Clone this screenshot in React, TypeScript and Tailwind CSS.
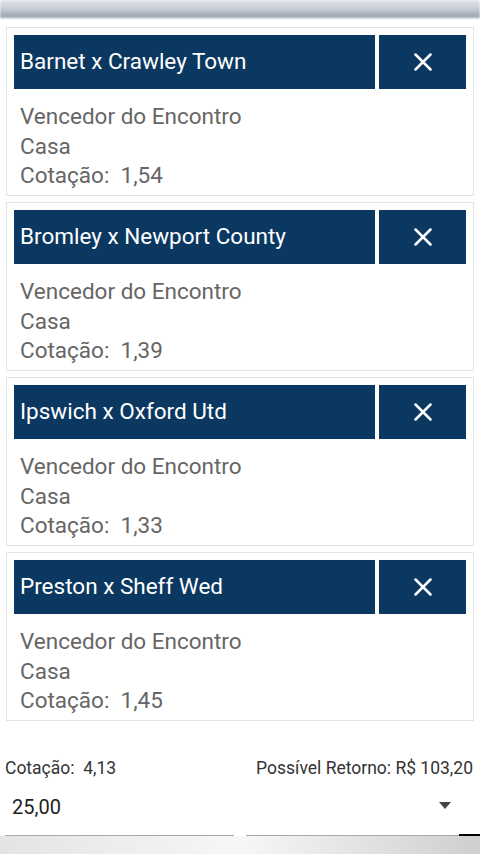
import React from "react";

const bets = [
  { match: "Barnet x Crawley Town", odd: "1,54" },
  { match: "Bromley x Newport County", odd: "1,39" },
  { match: "Ipswich x Oxford Utd", odd: "1,33" },
  { match: "Preston x Sheff Wed", odd: "1,45" },
];

function XIcon() {
  return (
    <svg width="18" height="18" viewBox="0 0 18 18" fill="none">
      <path d="M1.5 1.5 L16.5 16.5 M16.5 1.5 L1.5 16.5" stroke="white" strokeWidth="2.5" strokeLinecap="round" />
    </svg>
  );
}

export default function App() {
  return (
    <div
      className="w-[480px] h-[854px] bg-white overflow-hidden flex flex-col"
      style={{ fontFamily: "Roboto, 'Noto Sans', sans-serif" }}
    >
      <div className="h-[18px] shrink-0 bg-gradient-to-b from-[#e2e6ea] via-[#c6cdd4] to-[#939ea9] blur-[1px]" />
      <div className="flex flex-col gap-[6px] px-[6px] pt-[9px] shrink-0">
        {bets.map((b) => (
          <div key={b.match} className="border border-[#e4e4e4] h-[169px] px-[7px] pt-[7px] flex flex-col shrink-0">
            <div className="flex gap-[4px] h-[54px] shrink-0">
              <div className="flex-1 bg-[#0b3861] flex items-center pl-[6px] text-white text-[22.5px]">
                {b.match}
              </div>
              <div className="w-[87px] bg-[#0b3861] flex items-center justify-center">
                <XIcon />
              </div>
            </div>
            <div className="pl-[6px] pt-[13px] text-[#666666] text-[22.5px] leading-[29.5px]">
              <div>Vencedor do Encontro</div>
              <div>Casa</div>
              <div>Cotação:&nbsp; {b.odd}</div>
            </div>
          </div>
        ))}
      </div>
      <div className="flex justify-between items-center px-[5px] pt-[37px] text-[17.5px] leading-[20px] text-[#333333] shrink-0">
        <span>Cotação:&nbsp; 4,13</span>
        <span className="pr-[2px]">Possível Retorno: R$ 103,20</span>
      </div>
      <div className="flex items-end h-[58px] shrink-0">
        <div className="flex-1 ml-[5px] h-full flex items-center pt-[1px] border-b border-[#a9a9a9] pl-[7px] text-[20px] text-[#222222]">
          25,00
        </div>
        <div className="w-[12px]" />
        <div className="w-[213px] h-full flex items-center justify-end pr-[8px] pb-[2px] border-b border-[#a9a9a9]">
          <svg width="12" height="7" viewBox="0 0 12 7">
            <path d="M0 0 L12 0 L6 7 Z" fill="#444" />
          </svg>
        </div>
        <div className="w-[21px] h-[4px] bg-black mb-[-2px]" />
      </div>
      <div className="flex-1 bg-gradient-to-r from-[#e4e4e4] via-[#f7f7f7] to-[#cfcfcf]" />
    </div>
  );
}
